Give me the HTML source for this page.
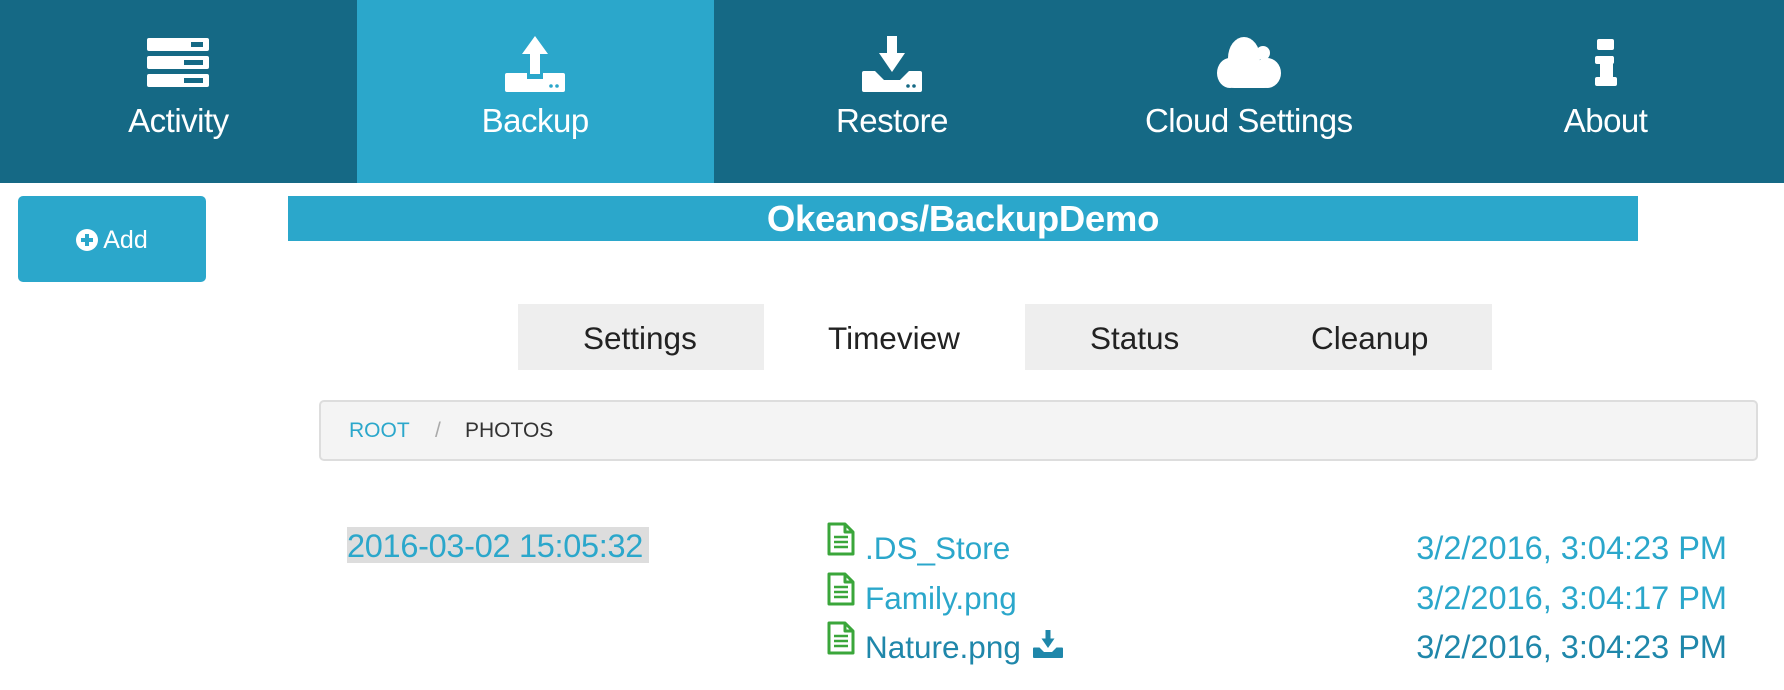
<!DOCTYPE html>
<html><head><meta charset="utf-8"><style>
*{margin:0;padding:0;box-sizing:border-box}
body{width:1784px;height:690px;overflow:hidden;background:#fff;font-family:"Liberation Sans",Arial,sans-serif;position:relative}
.nav{position:absolute;left:0;top:0;width:1784px;height:183px;background:#156985;display:flex}
.nav div{flex:1;position:relative;color:#fff;text-align:center}
.nav div.on{background:#2ba7cb}
.nav svg{position:absolute;left:50%;top:36px;transform:translateX(-50%)}
.nav span{position:absolute;left:0;right:0;top:102px;font-size:33px;letter-spacing:-0.5px}
.abs{position:absolute}
.fn{font-size:31.5px;line-height:36px}
.tm{font-size:32.5px;line-height:36px;text-align:right;right:57px}
</style></head><body>
<div class="nav">
 <div><svg width="62" height="52" viewBox="0 0 62 52"><rect x="0" y="2" width="62" height="13" rx="2" fill="#fff"/><rect x="0" y="20" width="62" height="13" rx="2" fill="#fff"/><rect x="0" y="38" width="62" height="13" rx="2" fill="#fff"/><rect x="44" y="6" width="12" height="5" fill="#156985"/><rect x="37" y="24" width="19" height="5" fill="#156985"/><rect x="37" y="42" width="19" height="5" fill="#156985"/></svg><span>Activity</span></div>
 <div class="on"><svg width="60" height="56" viewBox="0 0 60 56"><path d="M30 0 L43 18 L35 18 L35 38 L25 38 L25 18 L17 18 Z" fill="#fff"/><path d="M2 37 L22 37 L22 43 L38 43 L38 37 L58 37 Q60 37 60 39 L60 54 Q60 56 58 56 L2 56 Q0 56 0 54 L0 39 Q0 37 2 37Z" fill="#fff"/><circle cx="46" cy="50" r="1.8" fill="#2ba7cb"/><circle cx="52" cy="50" r="1.8" fill="#2ba7cb"/></svg><span>Backup</span></div>
 <div><svg width="60" height="56" viewBox="0 0 60 56"><path d="M25 0 L35 0 L35 17 L43 17 L30 36 L17 17 L25 17Z" fill="#fff"/><path d="M2 35 L13 35 L22 44 L38 44 L47 35 L58 35 Q60 35 60 37 L60 54 Q60 56 58 56 L2 56 Q0 56 0 54 L0 37 Q0 35 2 35Z" fill="#fff"/><circle cx="46" cy="50" r="1.8" fill="#156985"/><circle cx="52" cy="50" r="1.8" fill="#156985"/></svg><span>Restore</span></div>
 <div><svg width="66" height="52" viewBox="0 0 66 52"><ellipse cx="28" cy="22" rx="16" ry="21" fill="#fff"/><circle cx="47" cy="17" r="7" fill="#fff"/><ellipse cx="51" cy="37" rx="14" ry="15" fill="#fff"/><ellipse cx="14" cy="37" rx="13" ry="15" fill="#fff"/><rect x="10" y="30" width="46" height="22" rx="8" fill="#fff"/></svg><span>Cloud Settings</span></div>
 <div><svg width="24" height="48" viewBox="0 0 24 48" style="top:39px"><rect x="3" y="0" width="17" height="11" rx="2" fill="#fff"/><rect x="1" y="17" width="19" height="8" rx="2" fill="#fff"/><rect x="6" y="17" width="13" height="26" fill="#fff"/><rect x="1" y="38" width="22" height="9" rx="2" fill="#fff"/></svg><span>About</span></div>
</div>

<div class="abs" style="left:18px;top:196px;width:188px;height:86px;background:#2ba7cb;border-radius:5px;color:#fff;font-size:25px;display:flex;align-items:center;justify-content:center;padding-top:2px">
<svg width="22" height="22" viewBox="0 0 22 22" style="margin-right:5px"><circle cx="11" cy="11" r="11" fill="#fff"/><rect x="5" y="9" width="12" height="4" fill="#2ba7cb"/><rect x="9" y="5" width="4" height="12" fill="#2ba7cb"/></svg>Add</div>

<div class="abs" style="left:288px;top:196px;width:1350px;height:45px;background:#2ba7cb;color:#fff;font-weight:bold;font-size:36.5px;text-align:center;line-height:45px;letter-spacing:-0.3px">Okeanos/BackupDemo</div>

<div class="abs" style="left:518px;top:304px;width:246px;height:66px;background:#eee"></div>
<div class="abs" style="left:1025px;top:304px;width:467px;height:66px;background:#eee"></div>
<div class="abs" style="top:304px;height:66px;line-height:68px;font-size:31.5px;color:#222;left:0;width:1784px">
<span class="abs" style="left:583px">Settings</span>
<span class="abs" style="left:828px">Timeview</span>
<span class="abs" style="left:1090px">Status</span>
<span class="abs" style="left:1311px">Cleanup</span>
</div>

<div class="abs" style="left:319px;top:400px;width:1439px;height:61px;background:#f4f4f4;border:2px solid #ddd;border-radius:5px;font-size:21px;line-height:57px">
<span class="abs" style="left:28px;color:#2ba7cb">ROOT</span>
<span class="abs" style="left:114px;color:#aaa">/</span>
<span class="abs" style="left:144px;color:#333">PHOTOS</span>
</div>

<div class="abs" style="left:347px;top:527px;width:302px;height:36px;background:#ddd;color:#2ba7cb;font-size:32.5px;line-height:38px;letter-spacing:-0.3px;white-space:nowrap">2016-03-02 15:05:32</div>

<svg class="abs" style="left:827px;top:522px" width="28" height="34" viewBox="0 0 28 34"><path d="M2 2 L18 2 L26 10 L26 32 L2 32Z M18 2 L18 10 L26 10" fill="none" stroke="#3aa63a" stroke-width="3" stroke-linejoin="round"/><path d="M7 15H21M7 20H21M7 25H21" stroke="#3aa63a" stroke-width="2.5"/></svg>
<svg class="abs" style="left:827px;top:572px" width="28" height="34" viewBox="0 0 28 34"><path d="M2 2 L18 2 L26 10 L26 32 L2 32Z M18 2 L18 10 L26 10" fill="none" stroke="#3aa63a" stroke-width="3" stroke-linejoin="round"/><path d="M7 15H21M7 20H21M7 25H21" stroke="#3aa63a" stroke-width="2.5"/></svg>
<svg class="abs" style="left:827px;top:621px" width="28" height="34" viewBox="0 0 28 34"><path d="M2 2 L18 2 L26 10 L26 32 L2 32Z M18 2 L18 10 L26 10" fill="none" stroke="#3aa63a" stroke-width="3" stroke-linejoin="round"/><path d="M7 15H21M7 20H21M7 25H21" stroke="#3aa63a" stroke-width="2.5"/></svg>

<div class="abs fn" style="left:865px;top:530px;color:#2ba7cb">.DS_Store</div>
<div class="abs fn" style="left:865px;top:580px;color:#2ba7cb">Family.png</div>
<div class="abs fn" style="left:865px;top:629px;color:#1f87aa">Nature.png</div>
<svg class="abs" style="left:1033px;top:630px" width="30" height="28" viewBox="0 0 60 56"><path d="M25 0 L35 0 L35 17 L43 17 L30 36 L17 17 L25 17Z" fill="#1f87aa"/><path d="M2 35 L13 35 L22 44 L38 44 L47 35 L58 35 Q60 35 60 37 L60 54 Q60 56 58 56 L2 56 Q0 56 0 54 L0 37 Q0 35 2 35Z" fill="#1f87aa"/></svg>

<div class="abs tm" style="top:530px;color:#2ba7cb">3/2/2016, 3:04:23 PM</div>
<div class="abs tm" style="top:580px;color:#2ba7cb">3/2/2016, 3:04:17 PM</div>
<div class="abs tm" style="top:629px;color:#1f87aa">3/2/2016, 3:04:23 PM</div>
</body></html>
